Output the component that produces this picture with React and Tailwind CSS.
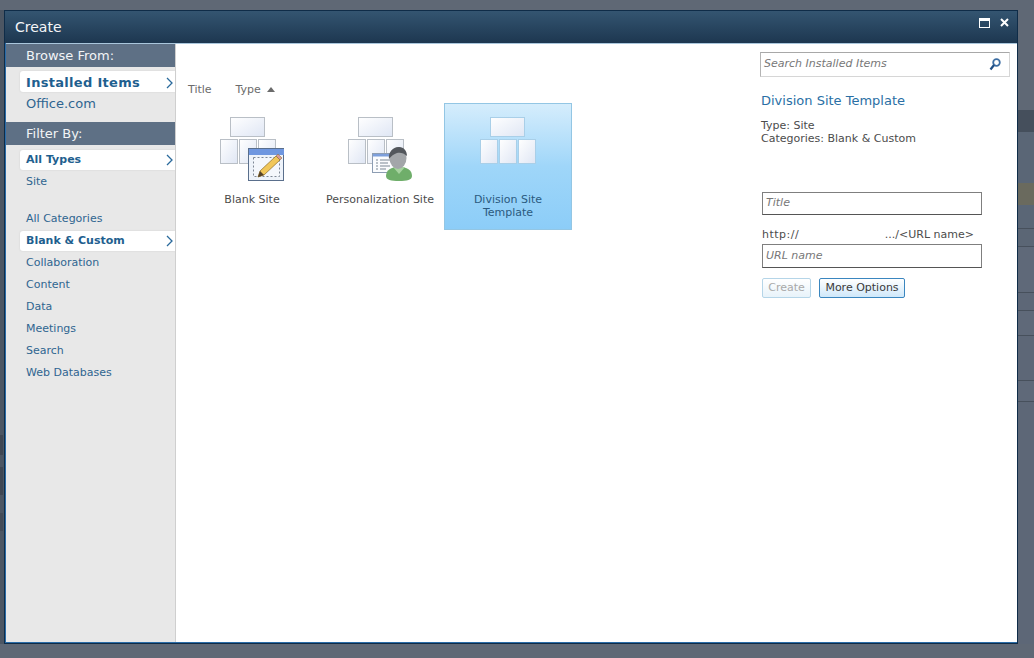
import React from 'react';

const font = { fontFamily: '"DejaVu Sans", Verdana, sans-serif' };

function Box({ x, y, w, h, id = 'boxFill', stroke = '#b9bfc6' }) {
  return <rect x={x + 0.5} y={y + 0.5} width={w - 1} height={h - 1} fill={`url(#${id})`} stroke={stroke} />;
}

function SiteBoxes({ plain }) {
  const stroke = plain ? '#a9cfe8' : '#b9bfc6';
  return (
    <>
      <defs>
        <linearGradient id="boxFill" x1="0" y1="0" x2="1" y2="1">
          <stop offset="0" stopColor="#ffffff" />
          <stop offset="1" stopColor={plain ? '#e9eef8' : '#dfe6f4'} />
        </linearGradient>
      </defs>
      <Box x={10} y={0} w={35} h={20} stroke={stroke} />
      <Box x={0} y={22} w={18} h={25} stroke={stroke} />
      <Box x={19} y={22} w={18} h={25} stroke={stroke} />
      <Box x={38} y={22} w={18} h={25} stroke={stroke} />
    </>
  );
}

function BlankIcon() {
  return (
    <svg width="65" height="64" viewBox="0 0 65 64" className="block">
      <SiteBoxes />
      <rect x="28.5" y="31.5" width="35" height="32" fill="#eef3fa" stroke="#5a6f8c" />
      <rect x="29" y="32" width="35" height="6" fill="#6f97e0" />
      <rect x="33.5" y="40.5" width="26" height="19" fill="#f4f7fc" stroke="#7d8794" strokeDasharray="2 2" />
      <path d="M38 60l2-6 16-15 4 4-16 15z" fill="#f1c75a" stroke="#8a6a25" strokeWidth="0.7" />
      <path d="M56 39l2-2 4 4-2 2z" fill="#d99a9a" stroke="#8a6a25" strokeWidth="0.5" />
      <path d="M38 60l2-6 4 4z" fill="#54422a" />
    </svg>
  );
}

function PersonIcon() {
  return (
    <svg width="65" height="64" viewBox="0 0 65 64" className="block">
      <SiteBoxes />
      <rect x="24.5" y="36.5" width="24" height="19" fill="#fbfcfe" stroke="#8d9db3" />
      <rect x="25" y="37" width="23" height="2.5" fill="#7d9fdc" />
      <path d="M28 43h2M28 46h2M28 49h2M28 52h2M32 43h10M32 46h8M32 49h10M32 52h6" stroke="#7b8794" strokeWidth="1" />
      <path d="M38 59c0-6 5-9 13-9s13 3 13 9c0 4-5 5-13 5s-13-1-13-5z" fill="#6fae6a" />
      <path d="M45 50l6 7 6-7z" fill="#a6d29f" />
      <ellipse cx="50" cy="41" rx="8.5" ry="11" fill="#a3a6a9" />
      <path d="M41 42c-1-7 4-12 10-12 5 0 8 4 8 9-3-3-7-4-10-3-3 1-6 3-8 6z" fill="#53575c" />
    </svg>
  );
}

function DivisionIcon() {
  return (
    <svg width="56" height="64" viewBox="0 0 56 64" className="block">
      <SiteBoxes plain />
    </svg>
  );
}

function NavHead({ children }) {
  return <div className="h-[23px] bg-[#5e7085] pl-[20px] text-[13px] leading-[24px] text-[#f2f4f6]">{children}</div>;
}

function NavSelected({ children, size = 'text-[11px]', height = 'h-[20px]', className = '' }) {
  return (
    <div className={`ml-[14px] flex ${height} items-center justify-between rounded-l-[3px] bg-white pl-[6px] font-bold text-[#1f5f8f] shadow-[0_0_2px_#cfcfcf] ${size} ${className}`}>
      <span>{children}</span>
      <svg width="8" height="12" viewBox="0 0 8 12" className="mr-[1px]"><path d="M1 1l5 5-5 5" fill="none" stroke="#2a6a9c" strokeWidth="1.3" /></svg>
    </div>
  );
}

function NavLink({ children }) {
  return <div className="flex h-[22px] items-center pl-[20px] text-[11px] text-[#2f6590]">{children}</div>;
}

function Tile({ label, icon, selected }) {
  return (
    <div className={`flex h-[127px] w-[128px] flex-col items-center border ${selected ? 'border-[#93c6e4] bg-gradient-to-b from-[#d5edfc] via-[#9fd6f9] to-[#8ccdf8] text-[#2b5a80]' : 'border-transparent text-[#4c4c4c]'}`}>
      <div className="flex h-[77px] items-end">{icon}</div>
      <div className="mt-[12px] w-[118px] text-center text-[11px] leading-[13px] whitespace-pre-line">{label}</div>
    </div>
  );
}

const strips = [
  ['h-[100px]', 'bg-[#5f6875]'],
  ['h-[22px]', 'bg-[#454f5c]'],
  ['h-[51px]', 'bg-[#5a6676]'],
  ['h-[22px]', 'bg-[#6a6a5e]'],
  ['h-[24px]', 'bg-[#5a6676] border-b border-[#47505c]'],
  ['h-[18px]', 'bg-[#5b6675] border-b border-[#47505c]'],
  ['h-[46px]', 'bg-[#5f6979] border-b border-[#47505c]'],
  ['h-[18px]', 'bg-[#5d6777] border-b border-[#47505c]'],
  ['h-[25px]', 'bg-[#5f6979] border-b border-[#47505c]'],
  ['h-[45px]', 'bg-[#5d6777] border-b border-[#47505c]'],
  ['h-[21px]', 'bg-[#5f6979] border-b border-[#47505c]'],
  ['flex-1', 'bg-[#5d6777]'],
];

export default function App() {
  return (
    <div style={font} className="flex h-[658px] w-[1034px] flex-col overflow-hidden bg-[#5f6875] pt-[10px]">
      <div className="flex h-[634px] w-full">
        <div className="flex w-[4px] flex-col bg-[#4c5663] pt-[425px]">
          <div className="h-[20px] w-[3px] bg-[#3f4753]" />
          <div className="mt-[12px] h-[28px] w-[3px] bg-[#3f4753]" />
          <div className="mt-[18px] h-[18px] w-[3px] bg-[#434b57]" />
        </div>
        <div className="flex w-[1014px] flex-col border border-[#0f2c48] bg-[#2a6ca8]">
          <div className="flex h-[32px] items-center justify-between bg-gradient-to-b from-[#345571] to-[#1d3750] pl-[10px] pr-[8px]">
            <span className="text-[14px] text-[#f4f6f8]">Create</span>
            <div className="mb-[9px] flex items-center gap-[10px]">
              <div className="h-[10px] w-[11px] border border-t-[3px] border-white" />
              <svg width="9" height="9" viewBox="0 0 9 9"><path d="M1 1l7 7M8 1l-7 7" stroke="#fff" strokeWidth="2" /></svg>
            </div>
          </div>
          <div className="ml-px mb-px flex min-h-0 flex-1 bg-white border-t border-[#a9c6dc]">
            <aside className="flex w-[170px] flex-col border-r border-[#cfcfcf] bg-[#e8e8e8]">
              <NavHead>Browse From:</NavHead>
              <div className="mt-[4px]">
                <NavSelected size="text-[13px] tracking-[0.3px]" height="h-[21px]" className="pt-[2px]">Installed Items</NavSelected>
              </div>
              <div className="flex h-[22px] items-center pl-[20px] pt-[2px] text-[13px] text-[#2f6590]">Office.com</div>
              <div className="mt-[8px]"><NavHead>Filter By:</NavHead></div>
              <div className="mt-[5px]"><NavSelected>All Types</NavSelected></div>
              <div className="mt-[1px]"><NavLink>Site</NavLink></div>
              <div className="mt-[15px]"><NavLink>All Categories</NavLink></div>
              <NavSelected className="mt-[1px] mb-[1px]">Blank &amp; Custom</NavSelected>
              <NavLink>Collaboration</NavLink>
              <NavLink>Content</NavLink>
              <NavLink>Data</NavLink>
              <NavLink>Meetings</NavLink>
              <NavLink>Search</NavLink>
              <NavLink>Web Databases</NavLink>
            </aside>

            <main className="flex-1 pl-[12px]">
              <div className="flex h-[59px] items-end gap-[24px] pb-[5px] text-[11px] text-[#6b6b6b]">
                <span>Title</span>
                <span className="flex items-center gap-[6px]">
                  Type
                  <svg width="8" height="5" viewBox="0 0 8 5"><path d="M0 5l4-5 4 5z" fill="#6b6b6b" /></svg>
                </span>
              </div>
              <div className="flex">
                <Tile label="Blank Site" icon={<BlankIcon />} />
                <Tile label="Personalization Site" icon={<PersonIcon />} />
                <Tile selected label={'Division Site\nTemplate'} icon={<DivisionIcon />} />
              </div>
            </main>

            <section className="w-[258px] pl-[1px] pt-[8px]">
              <div className="flex h-[25px] w-[250px] items-center justify-between border border-[#d6d6d6] border-t-[#a8a8a8] border-l-[#b4b4b4] pl-[3px] pr-[8px] text-[11px] italic text-[#777]">
                <span>Search Installed Items</span>
                <svg width="12" height="13" viewBox="0 0 12 13"><circle cx="7.5" cy="4.5" r="3.3" fill="none" stroke="#3d6ea3" strokeWidth="1.8" /><path d="M5 7l-3.5 4.5" stroke="#1f4f86" strokeWidth="2.2" /></svg>
              </div>
              <div className="ml-px mt-[16px] text-[13px] leading-[16px] text-[#2a6fa5]">Division Site Template</div>
              <div className="ml-px mt-[10px] text-[11px] leading-[13px] text-[#4c4c4c]">
                <div>Type: Site</div>
                <div>Categories: Blank &amp; Custom</div>
              </div>
              <div className="ml-[2px] mt-[47px] w-[220px]">
                <div className="flex h-[23px] items-center border border-[#7f7f7f] border-b-[#555] pl-[3px] text-[11px] italic text-[#777]">Title</div>
                <div className="mt-[12px] flex h-[15px] justify-between pr-[8px] text-[11px] leading-[15px] text-[#4c4c4c]">
                  <span className="tracking-[0.5px]">http://</span>
                  <span>.../&lt;URL name&gt;</span>
                </div>
                <div className="mt-[2px] flex h-[24px] items-center border border-[#7f7f7f] border-b-[#555] pl-[3px] text-[11px] italic text-[#777]">URL name</div>
                <div className="mt-[10px] flex gap-[8px] text-[11px]">
                  <div className="flex h-[20px] w-[49px] items-center justify-center rounded-[2px] border border-[#b5d5e8] bg-gradient-to-b from-white to-[#e8f3fa] pt-[1px] text-[#a9a9a9]">Create</div>
                  <div className="flex h-[20px] w-[86px] items-center justify-center rounded-[2px] border border-[#3a86bf] bg-gradient-to-b from-white to-[#cfe8fa] pt-[1px] text-[#3a3a3a]">More Options</div>
                </div>
              </div>
            </section>
          </div>
        </div>
        <div className="flex w-[16px] flex-col">
          {strips.map(([h, c], i) => <div key={i} className={`${h} ${c}`} />)}
        </div>
      </div>
    </div>
  );
}
